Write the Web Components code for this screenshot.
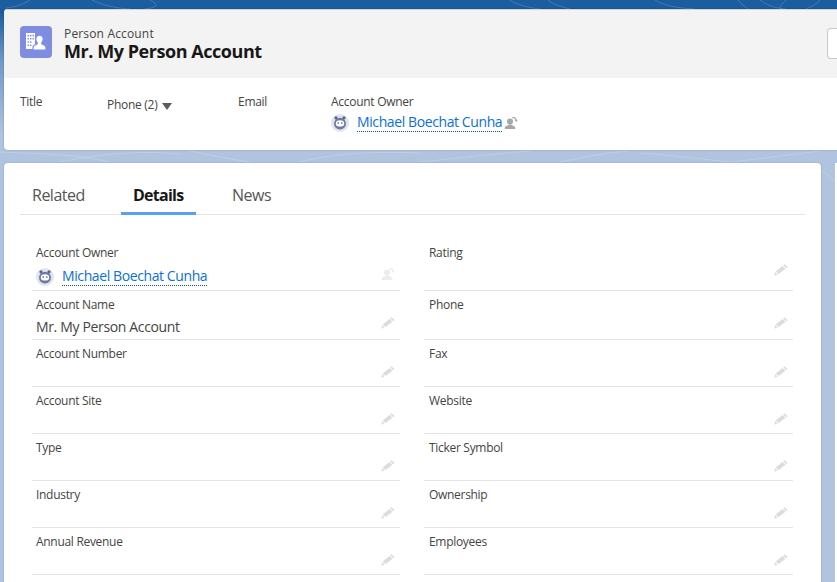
<!DOCTYPE html>
<html>
<head>
<meta charset="utf-8">
<style>
  html, body { margin: 0; height: 582px; overflow: hidden; }
  body {
    width: 837px;
    font-family: "Open Sans", "Noto Sans", sans-serif;
    background: linear-gradient(180deg, #1b5e9f 0, #1b5e9f 12px, #6f97c9 60px, #b0c4e0 135px, #b0c4e0 100%);
  }
  .page { position: relative; display: flex; flex-direction: column; gap: 13px; padding: 9px 0 0 4px; }
  .lower { display: flex; gap: 14px; }
  .next-card { flex: 1; height: 440px; background: #fff; }
</style>
</head>
<body>
<template id="page-backdrop-tpl">
  <style>
    :host { display: block; position: absolute; left: 0; top: 0; width: 837px; height: 582px; }
    svg { display: block; }
    path { fill: none; stroke: #fff; stroke-opacity: .17; stroke-width: 1; }
  </style>
  <svg width="837" height="582" viewBox="0 0 837 582">
    <path d="M30 0c-6 4-14 7-24 8M92 0c8 4 20 8 38 9M150 0c12 6 4 8-6 9M510 0c4 4 20 8 30 9M548 0c6 5 14 7 22 9"/>
    <path d="M655 0c8 5 20 8 40 9M738 0c4 5 8 7 10 9M760 0c6 4 12 8 26 9M786 0c-4 4-8 7-4 9M820 0c-4 5-10 7-14 9"/>
    <path d="M0 152c40 2 80 2 110 10M60 162c40-8 80-12 120-8M190 151c20 4 40 8 60 11M300 162c30-8 70-11 120-9"/>
    <path d="M420 162c40-4 70-8 110-11M560 162c30-6 50-10 70-11M640 153c30 2 60 6 90 9M730 162c20-2 50-6 90-11M821 170c6 4 10 8 14 12"/>
  </svg>
</template>

<template id="user-link-tpl">
  <style>
    :host { display: inline-flex; align-items: center; gap: 8px; }
    a { font-size: 14px; line-height: 18px; color: #0b6fd8; text-decoration: none; border-bottom: 1px dotted #0b5cab; letter-spacing: -.4px; }
    svg { display: block; }
  </style>
  <svg width="18" height="18" viewBox="0 0 18 18">
    <circle cx="9" cy="9" r="9" fill="#e0e4ed"/>
    <circle cx="5" cy="3.800" r="1.600" fill="#56648f"/>
    <circle cx="13" cy="3.800" r="1.600" fill="#56648f"/>
    <ellipse cx="9" cy="9.600" rx="6" ry="5.800" fill="#6b79a3"/>
    <ellipse cx="9" cy="9.400" rx="4.200" ry="3.200" fill="#fff"/>
    <circle cx="7.200" cy="9" r=".8" fill="#3e4a70"/>
    <circle cx="10.800" cy="9" r=".8" fill="#3e4a70"/>
  </svg>
  <a href="#"><slot></slot></a>
</template>

<template id="owner-icon-tpl">
  <style>
    :host { display: block; width: 14px; height: 14px; color: #a8a8a8; }
    svg { display: block; }
  </style>
  <svg width="14" height="14" viewBox="0 0 14 14" fill="currentColor">
    <circle cx="6" cy="5.600" r="3"/>
    <path d="M.6 12.200c0-1.900 2.300-2.700 3.800-3.300l.6-.5h2l.6.5c1.500.6 3.800 1.400 3.800 3.300 0 .6-.3.8-.8.8H1.400c-.5 0-.8-.2-.8-.8z"/>
    <path d="M8.200 1.100c2.200-.6 4.200.8 4.600 2.900l1-.2-1.300 2.200-1.900-1.500 1-.2c-.3-1.400-1.800-2.400-3.200-1.900z"/>
  </svg>
</template>

<template id="edit-icon-tpl">
  <style>
    :host { display: block; width: 14px; height: 12px; color: #dcdcdc; }
    svg { display: block; }
  </style>
  <svg width="14" height="12" viewBox="0 0 14 12" fill="currentColor">
    <path d="M10.800.4l2.500 2.300c.2.200.2.500 0 .7l-1 .9-3.100-2.900 1-.9c.2-.2.400-.2.600-.1z"/>
    <path d="M8.500 1.900l3 2.800-6.900 5.300-2.900-2.500z"/>
    <path d="M1.200 8l2.400 2.400-3.300 1.300z"/>
  </svg>
</template>

<template id="record-header-tpl">
  <style>
    :host { display: block; border-radius: 4px 0 0 4px; background: #fff; box-shadow: 0 0 2px rgba(0,0,0,.25); overflow: hidden; color: #181818; }
    .top { display: flex; align-items: flex-start; height: 69px; box-sizing: border-box; padding: 16px 16px 0; background: #f3f3f3; border-top: 1px solid #d4d4d4; }
    .icon { width: 32px; height: 32px; border-radius: 4px; background: #7f8de1; display: flex; align-items: center; justify-content: center; flex: none; }
    .names { margin-left: 12px; }
    .type { font-size: 12px; line-height: 14px; color: #444; margin-top: 1px; letter-spacing: .16px; }
    .name { font-size: 18px; line-height: 20px; font-weight: 700; letter-spacing: -.45px; }
    .action { margin-left: auto; margin-right: -16px; margin-top: 2px; width: 10px; height: 31px; box-sizing: border-box; flex: none; background: #fff; border: 1px solid #c9c9c9; border-right: 0; border-radius: 4px 0 0 4px; }
    .fields { height: 72px; box-sizing: border-box; padding: 16px 16px 0; display: flex; align-items: flex-start; }
  </style>
  <div class="top">
    <div class="icon">
      <svg width="22" height="22" viewBox="0 0 22 22" fill="#fff">
        <path fill-rule="evenodd" d="M1 2h9v16H1z M2.500 3.800v1.600h1.400V3.800z M5 3.800v1.600h1.400V3.800z M7.500 3.800v1.600h1.400V3.800z M2.500 7v1.600h1.400V7z M5 7v1.600h1.400V7z M7.500 7v1.600h1.400V7z M2.500 10.200v1.600h1.400v-1.600z M5 10.200v1.600h1.400v-1.600z M2.500 13.400v1.600h1.400v-1.600z M5 13.400v1.600h1.400v-1.600z"/>
        <path stroke="#7f8de1" stroke-width="1.200" d="M14.500 4.200a3.700 3.700 0 0 1 3.700 3.900c0 1.400-.6 2.700-1.400 3.500v1.300c1.600.6 4.200 1.400 4.200 3.500V19H8v-2.600c0-2.100 2.600-2.900 4.200-3.500v-1.300c-.8-.8-1.400-2.100-1.400-3.500a3.700 3.700 0 0 1 3.700-3.900z"/>
      </svg>
    </div>
    <div class="names">
      <div class="type"><slot name="type"></slot></div>
      <div class="name"><slot name="name"></slot></div>
    </div>
    <div class="action"></div>
  </div>
  <div class="fields"><slot></slot></div>
</template>

<template id="highlight-field-tpl">
  <style>
    :host { display: block; font-size: 12px; line-height: 16px; color: #444; letter-spacing: -.28px; }
    :host([phone]) { padding-top: 3px; }
    .caret { display: inline-block; width: 0; height: 0; margin-left: 5px; border: 5.500px solid transparent; border-top: 7px solid #5c5c5c; border-bottom: 0; vertical-align: -1px; }
    .value { display: flex; align-items: center; gap: 2px; margin-top: 3px; letter-spacing: 0; }
  </style>
  <div class="label"><slot></slot><span class="caret" id="caret"></span></div>
  <div class="value"><slot name="value"></slot></div>
</template>

<template id="record-tabs-tpl">
  <style>
    :host { display: block; flex: none; width: 817px; height: 440px; box-sizing: border-box; background: #fff; border-radius: 4px 4px 0 0; padding: 0 16px; box-shadow: 0 0 2px rgba(0,0,0,.2); }
    nav { display: flex; height: 51px; border-bottom: 1px solid #e5e5e5; box-sizing: content-box; }
    .tab { box-sizing: border-box; height: 51px; padding: 21px 12px 0; font-size: 16px; line-height: 22px; color: #555; letter-spacing: -.5px; }
    .tab.a { width: 101px; }
    .tab.b { width: 75px; height: 52px; margin-bottom: -1px; font-weight: 700; color: #181818; border-bottom: 3px solid #5aa0ee; letter-spacing: -.75px; }
    .tab.c { padding-left: 36px; }
    .body { padding: 25px 12px 0; }
  </style>
  <nav>
    <div class="tab a">Related</div>
    <div class="tab b">Details</div>
    <div class="tab c">News</div>
  </nav>
  <div class="body"><slot></slot></div>
</template>

<template id="field-grid-tpl">
  <style>
    :host { display: grid; grid-template-columns: 368px 369px; column-gap: 24px; }
  </style>
  <slot></slot>
</template>

<template id="detail-field-tpl">
  <style>
    :host { display: block; box-sizing: border-box; padding: var(--pad, 6px) 5px 0 4px; border-bottom: 1px solid #e3e3e3; color: #444; }
    :host(:nth-child(even)) { padding-left: 5px; }
    .label { font-size: 12px; line-height: 16px; letter-spacing: -.3px; }
    .row { display: flex; justify-content: space-between; align-items: flex-start; height: var(--row, 24px); }
    .value { font-size: 14px; line-height: 20px; padding-top: 4px; letter-spacing: -.35px; color: #444; }
    .tool { margin-top: var(--tool, 4px); flex: none; }
  </style>
  <div class="label"><slot name="label"></slot></div>
  <div class="row">
    <div class="value"><slot></slot></div>
    <div class="tool"><slot name="tool"><edit-icon></edit-icon></slot></div>
  </div>
</template>

<page-backdrop></page-backdrop>
<div class="page">
  <record-header>
    <span slot="type">Person Account</span>
    <span slot="name">Mr. My Person Account</span>
    <highlight-field style="width:87px">Title</highlight-field>
    <highlight-field phone style="width:131px">Phone (2)</highlight-field>
    <highlight-field style="width:93px">Email</highlight-field>
    <highlight-field>Account Owner
      <user-link slot="value">Michael Boechat Cunha</user-link>
      <owner-icon slot="value"></owner-icon>
    </highlight-field>
  </record-header>

  <div class="lower">
    <record-tabs>
      <field-grid>
        <detail-field style="--pad:5px;--row:29px;--tool:6px">
          <span slot="label">Account Owner</span>
          <user-link style="margin-top:2px">Michael Boechat Cunha</user-link>
          <owner-icon slot="tool" style="color:#ececec"></owner-icon>
        </detail-field>
        <detail-field style="--pad:5px;--row:29px;--tool:3px"><span slot="label">Rating</span></detail-field>
        <detail-field style="--row:26px"><span slot="label">Account Name</span>Mr. My Person Account</detail-field>
        <detail-field style="--row:26px"><span slot="label">Phone</span></detail-field>
        <detail-field><span slot="label">Account Number</span></detail-field>
        <detail-field><span slot="label">Fax</span></detail-field>
        <detail-field><span slot="label">Account Site</span></detail-field>
        <detail-field><span slot="label">Website</span></detail-field>
        <detail-field><span slot="label">Type</span></detail-field>
        <detail-field><span slot="label">Ticker Symbol</span></detail-field>
        <detail-field><span slot="label">Industry</span></detail-field>
        <detail-field><span slot="label">Ownership</span></detail-field>
        <detail-field><span slot="label">Annual Revenue</span></detail-field>
        <detail-field><span slot="label">Employees</span></detail-field>
      </field-grid>
    </record-tabs>
    <div class="next-card"></div>
  </div>
</div>

<script>
  // same small class for every element, only the template changes
  function register(tag, tplId, setup) {
    customElements.define(tag, class extends HTMLElement {
      constructor() {
        super();
        this.attachShadow({ mode: 'open' });
        this.shadowRoot.appendChild(document.getElementById(tplId).content.cloneNode(true));
      }
      connectedCallback() {
        if (setup) setup(this);
      }
    });
  }

  register('page-backdrop', 'page-backdrop-tpl');
  register('user-link', 'user-link-tpl');
  register('owner-icon', 'owner-icon-tpl');
  register('edit-icon', 'edit-icon-tpl');
  register('record-header', 'record-header-tpl');
  register('highlight-field', 'highlight-field-tpl', (el) => {
    // only the phone field has the dropdown caret
    if (!el.hasAttribute('phone')) el.shadowRoot.getElementById('caret').remove();
  });
  register('record-tabs', 'record-tabs-tpl');
  register('field-grid', 'field-grid-tpl');
  register('detail-field', 'detail-field-tpl');
</script>
</body>
</html>
